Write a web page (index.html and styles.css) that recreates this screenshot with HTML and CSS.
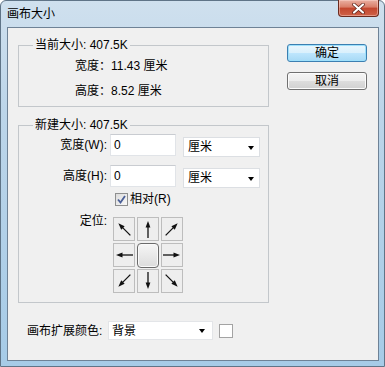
FILE: index.html
```html
<!DOCTYPE html>
<html lang="zh-CN">
<head>
  <meta charset="UTF-8" />
  <title>画布大小</title>
  <link rel="stylesheet" href="styles.css">
</head>
<body>
  <div class="window">
    <div class="titlebar">
      <span class="title">画布大小</span>
      <button class="close" aria-label="关闭">
        <svg width="13" height="11" viewBox="0 0 13 11">
          <path d="M2 1.5 L11 9.5 M11 1.5 L2 9.5" stroke="#5a1e14" stroke-width="3.6" stroke-linecap="round" />
          <path d="M2 1.5 L11 9.5 M11 1.5 L2 9.5" stroke="#fff" stroke-width="2.2" stroke-linecap="round" />
        </svg>
      </button>
    </div>

    <div class="client">
      <div class="main">
        <!-- current size -->
        <fieldset class="group current">
          <legend>当前大小: 407.5K</legend>
          <div class="info first">宽度：11.43 厘米</div>
          <div class="info">高度：8.52 厘米</div>
        </fieldset>

        <!-- new size -->
        <fieldset class="group new">
          <legend>新建大小: 407.5K</legend>
          <div class="row first">
            <label class="lbl">宽度(W):</label>
            <div class="input">0</div>
            <div class="select unit">厘米<span class="caret"></span></div>
          </div>
          <div class="row second">
            <label class="lbl">高度(H):</label>
            <div class="input">0</div>
            <div class="select unit">厘米<span class="caret"></span></div>
          </div>
          <div class="row check-row">
            <span class="checkbox">
              <svg width="11" height="11" viewBox="0 0 11 11">
                <path d="M2 5.5 L4.5 8.5 L9 2" fill="none" stroke="#4a5f97" stroke-width="1.8" />
              </svg>
            </span>
            <span>相对(R)</span>
          </div>
          <div class="row anchor-row">
            <label class="lbl anchor-lbl">定位:</label>
            <div class="anchor">
              <div class="cell"><svg viewBox="0 0 20 22"><g transform="rotate(-135 10 11)"><line x1="1" y1="11" x2="13" y2="11" /><polygon points="18,11 11.5,8.6 11.5,13.4" /></g></svg></div>
              <div class="cell"><svg viewBox="0 0 20 22"><g transform="rotate(-90 10 11)"><line x1="1" y1="11" x2="13" y2="11" /><polygon points="18,11 11.5,8.6 11.5,13.4" /></g></svg></div>
              <div class="cell"><svg viewBox="0 0 20 22"><g transform="rotate(-45 10 11)"><line x1="1" y1="11" x2="13" y2="11" /><polygon points="18,11 11.5,8.6 11.5,13.4" /></g></svg></div>
              <div class="cell"><svg viewBox="0 0 20 22"><g transform="rotate(180 10 11)"><line x1="1" y1="11" x2="13" y2="11" /><polygon points="18,11 11.5,8.6 11.5,13.4" /></g></svg></div>
              <div class="cell center"><span class="knob"></span></div>
              <div class="cell"><svg viewBox="0 0 20 22"><g><line x1="1" y1="11" x2="13" y2="11" /><polygon points="18,11 11.5,8.6 11.5,13.4" /></g></svg></div>
              <div class="cell"><svg viewBox="0 0 20 22"><g transform="rotate(135 10 11)"><line x1="1" y1="11" x2="13" y2="11" /><polygon points="18,11 11.5,8.6 11.5,13.4" /></g></svg></div>
              <div class="cell"><svg viewBox="0 0 20 22"><g transform="rotate(90 10 11)"><line x1="1" y1="11" x2="13" y2="11" /><polygon points="18,11 11.5,8.6 11.5,13.4" /></g></svg></div>
              <div class="cell"><svg viewBox="0 0 20 22"><g transform="rotate(45 10 11)"><line x1="1" y1="11" x2="13" y2="11" /><polygon points="18,11 11.5,8.6 11.5,13.4" /></g></svg></div>
            </div>
          </div>
        </fieldset>

        <!-- extension colour -->
        <div class="ext">
          <label class="ext-lbl">画布扩展颜色:</label>
          <div class="select ext-select">背景<span class="caret"></span></div>
          <span class="swatch"></span>
        </div>
      </div>

      <div class="buttons">
        <button class="btn default">确定</button>
        <button class="btn">取消</button>
      </div>
    </div>
  </div>
</body>
</html>
```

FILE: styles.css
```css
* {
  box-sizing: border-box;
}

html, body {
  margin: 0;
}

body {
  width: 385px;
  height: 367px;
  overflow: hidden;
  font: 12px/16px "Liberation Sans", "Noto Sans CJK SC", sans-serif;
  color: #000;
}

/* Window frame */

.window {
  height: 367px;
  display: flex;
  flex-direction: column;
  padding: 0 5px 5px 6px;
  border: 1px solid #5f7487;
  border-radius: 6px 6px 0 0;
  background: linear-gradient(180deg, #cfe0ee 0%, #bcd5e9 30%, #a6cbe7 100%);
}

.titlebar {
  height: 26px;
  flex-shrink: 0;
  display: flex;
  justify-content: space-between;
  align-items: flex-start;
}

.title {
  margin-top: 5px;
  line-height: 16px;
}

.close {
  width: 41px;
  height: 17px;
  margin-top: -1px;
  padding: 0;
  display: flex;
  align-items: center;
  justify-content: center;
  border: 1px solid #6b2a1e;
  border-top: none;
  border-radius: 0 0 4px 4px;
  background: linear-gradient(180deg, #eab0a2 0%, #d97d68 45%, #c3462e 50%, #cf6147 100%);
  box-shadow: inset 0 0 0 1px rgba(255, 220, 210, 0.45);
}

/* Client area */

.client {
  flex: 1;
  display: flex;
  background: #f0f0f0;
  border: 1px solid #6e8296;
  padding: 9px 10px 0 10px;
}

.main {
  width: 251px;
  flex-shrink: 0;
}

.group {
  margin: 0;
  padding: 0 0 2px 14px;
  border: 1px solid #c3c7cb;
  min-inline-size: 0;
}

.group legend {
  padding: 0 2px;
  line-height: 16px;
}

.info {
  margin-left: 42px;
  line-height: 25px;
}

.info.first {
  margin-top: 1px;
}

.new {
  margin-top: 10px;
  padding-bottom: 9px;
}

/* Rows of the new size group */

.row {
  display: flex;
  align-items: flex-start;
}

.row.first {
  margin-top: 1px;
}

.row.second {
  margin-top: 8px;
}

.lbl {
  width: 74px;
  text-align: right;
  line-height: 22px;
  flex-shrink: 0;
}

.input {
  width: 66px;
  height: 22px;
  margin-left: 3px;
  padding-left: 3px;
  line-height: 20px;
  background: #fff;
  border: 1px solid #e1e4e8;
  border-top-color: #c9ccd1;
}

.select {
  position: relative;
  height: 20px;
  padding-left: 4px;
  line-height: 19px;
  background: #fff;
  border: 1px solid #dcdfe3;
}

.select.unit {
  width: 77px;
  margin-left: 7px;
  margin-top: 3px;
}

.caret {
  position: absolute;
  right: 5px;
  top: 8px;
  width: 0;
  height: 0;
  border-left: 3.5px solid transparent;
  border-right: 3.5px solid transparent;
  border-top: 4px solid #000;
}

.check-row {
  margin-top: 3px;
  margin-left: 82px;
  align-items: center;
  gap: 2px;
  height: 16px;
}

.checkbox {
  width: 13px;
  height: 13px;
  display: flex;
  align-items: center;
  justify-content: center;
  border: 1px solid #8e8f8f;
  background: linear-gradient(135deg, #dcdcdc, #f8f8f8);
}

.anchor-row {
  margin-top: 10px;
}

.anchor-lbl {
  line-height: 16px;
  margin-top: -4px;
}

.anchor {
  margin-left: 6px;
  display: grid;
  grid-template-columns: repeat(3, 22px);
  grid-template-rows: repeat(3, 24px);
  gap: 2px;
}

.cell {
  border: 1px solid #bdbdbd;
  background: #eeeeee;
  display: flex;
  align-items: center;
  justify-content: center;
}

.cell svg {
  width: 20px;
  height: 22px;
}

.cell line {
  stroke: #111;
  stroke-width: 1.3;
}

.cell polygon {
  fill: #111;
}

.cell.center {
  border: none;
  background: none;
}

.knob {
  width: 23px;
  height: 25px;
  border: 1px solid #6b6b6b;
  border-radius: 4px;
  background: linear-gradient(180deg, #f6f6f6, #dcdcdc);
  box-shadow: inset 0 0 0 1px #fafafa;
}

/* Canvas extension colour */

.ext {
  margin-top: 18px;
  padding-left: 9px;
  display: flex;
  align-items: center;
}

.ext-lbl {
  width: 81px;
  flex-shrink: 0;
}

.ext-select {
  width: 105px;
  height: 19px;
  line-height: 18px;
  padding-left: 3px;
  border-color: #e3e5e8;
}

.ext-select .caret {
  right: 7px;
  top: 7px;
}

.swatch {
  width: 14px;
  height: 14px;
  margin-left: 6px;
  background: #fff;
  border: 1px solid #a3a3a3;
}

/* Buttons */

.buttons {
  margin-left: 18px;
  padding-top: 7px;
  display: flex;
  flex-direction: column;
  gap: 10px;
}

.btn {
  width: 80px;
  height: 18px;
  padding: 0;
  font: inherit;
  line-height: 16px;
  color: #000;
  border: 1px solid #707070;
  border-radius: 3px;
  background: linear-gradient(180deg, #f4f4f4 0%, #ececec 50%, #dddddd 51%, #d0d0d0 100%);
  box-shadow: inset 0 0 0 1px #fbfbfb;
}

.btn.default {
  border-color: #3c7fb1;
  background: linear-gradient(180deg, #eaf6fd 0%, #d9f0fc 50%, #bee6fd 51%, #a7d9f5 100%);
  box-shadow: inset 0 0 0 1px #9ee0fb;
}
```
